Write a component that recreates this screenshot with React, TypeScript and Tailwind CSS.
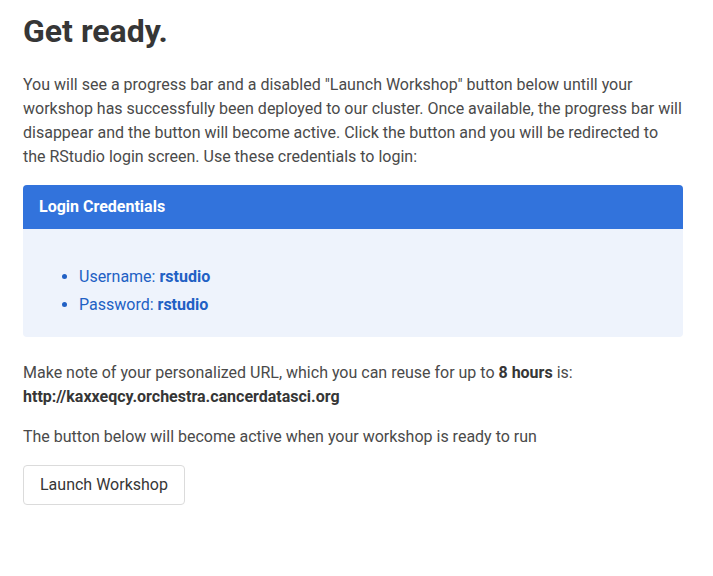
import React from "react";

export default function App() {
  return (
    <div className="min-h-[576px] bg-white px-[23px] pt-[13px] text-[16px] leading-[24px] text-[#4a4a4a]" style={{ fontFamily: "Roboto, 'Liberation Sans', sans-serif" }}>
      <div className="w-[660px]">
        <h1 className="mb-6 text-[32px] font-bold leading-[36px] text-[#363636]">Get ready.</h1>
        <p className="mb-4">
          You will see a progress bar and a disabled "Launch Workshop" button below untill your workshop has successfully been deployed to our cluster. Once available, the progress bar will disappear and the button will become active. Click the button and you will be redirected to the RStudio login screen. Use these credentials to login:
        </p>
        <div className="mb-6 rounded-[4px] bg-[#eef3fc]">
          <div className="rounded-t-[4px] bg-[#3273dc] px-4 py-3 font-bold leading-[20px] text-white">Login Credentials</div>
          <div className="px-6 py-5 text-[#2160c4]">
            <ul className="ml-8 mt-4 list-disc">
              <li>Username: <strong>rstudio</strong></li>
              <li className="mt-1">Password: <strong>rstudio</strong></li>
            </ul>
          </div>
        </div>
        <p className="mb-4">
          Make note of your personalized URL, which you can reuse for up to <strong className="text-[#363636]">8 hours</strong> is:
          <br />
          <strong className="text-[#363636]">http://kaxxeqcy.orchestra.cancerdatasci.org</strong>
        </p>
        <p className="mb-4">The button below will become active when your workshop is ready to run</p>
        <button className="h-10 rounded-[4px] border border-[#dbdbdb] bg-white px-4 text-[#363636]">Launch Workshop</button>
      </div>
    </div>
  );
}
